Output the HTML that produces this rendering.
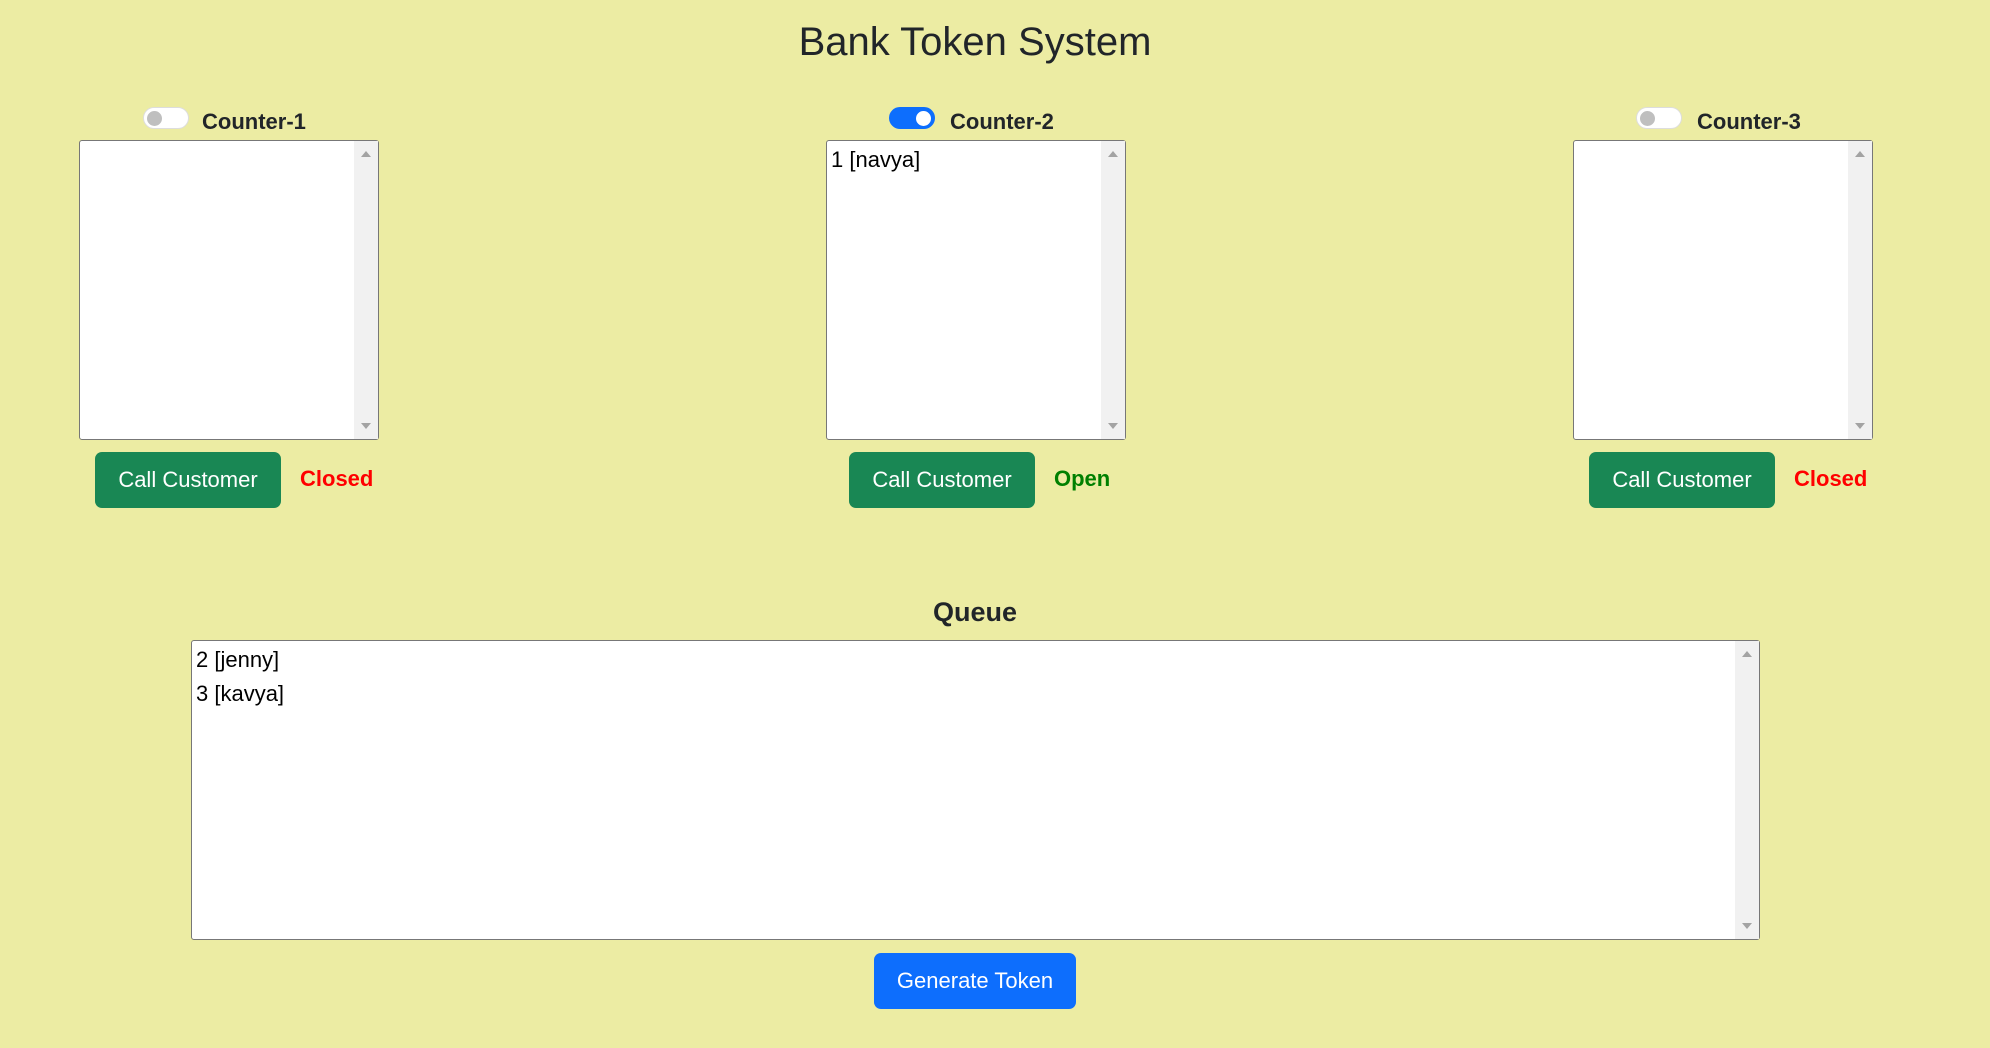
<!DOCTYPE html>
<html><head><style>
body{margin:0;width:1990px;height:1048px;background:#ececa3;font-family:"Liberation Sans",sans-serif;color:#212529;position:relative;overflow:hidden}
.a{position:absolute}
h1{position:absolute;left:0;width:1950px;top:16px;margin:0;text-align:center;font-size:40px;font-weight:500;line-height:52px}
.ta{position:absolute;background:#fff;border:1px solid #777;border-radius:3px;box-sizing:border-box;font-size:22px;line-height:34px;padding:2px 4px;color:#000}
.sb{position:absolute;right:0;top:0;bottom:0;width:24px;background:#f1f1f1}
.sb:before{content:"";position:absolute;left:7px;top:10px;border:5px solid transparent;border-bottom:6px solid #a3a3a3;border-top:0}
.sb:after{content:"";position:absolute;left:7px;bottom:10px;border:5px solid transparent;border-top:6px solid #a3a3a3;border-bottom:0}
.tg{position:absolute;width:46px;height:22px;border-radius:12px;border:1px solid #ddd;background:#fff;box-sizing:border-box;top:107px}
.tg i{position:absolute;left:3px;top:3px;width:15px;height:15px;border-radius:50%;background:#bfbfbf}
.tg.on{background:#0d6efd;border-color:#0d6efd}
.tg.on i{left:auto;right:3px;background:#fff}
.lb{position:absolute;top:108px;font-size:22px;font-weight:bold;line-height:28px}
.btn{position:absolute;top:452px;width:186px;height:56px;border-radius:7px;background:#198754;color:#fff;font-size:22px;line-height:56px;text-align:center}
.st{position:absolute;top:464px;font-size:22px;font-weight:bold;line-height:30px}
</style></head><body>
<h1>Bank Token System</h1>

<div class="tg" style="left:143px"><i></i></div><div class="lb" style="left:202px">Counter-1</div>
<div class="ta" style="left:79px;top:140px;width:300px;height:300px"><div class="sb"></div></div>
<div class="btn" style="left:95px">Call Customer</div><div class="st" style="left:300px;color:#f00">Closed</div>

<div class="tg on" style="left:889px"><i></i></div><div class="lb" style="left:950px">Counter-2</div>
<div class="ta" style="left:826px;top:140px;width:300px;height:300px">1 [navya]<div class="sb"></div></div>
<div class="btn" style="left:849px">Call Customer</div><div class="st" style="left:1054px;color:#008000">Open</div>

<div class="tg" style="left:1636px"><i></i></div><div class="lb" style="left:1697px">Counter-3</div>
<div class="ta" style="left:1573px;top:140px;width:300px;height:300px"><div class="sb"></div></div>
<div class="btn" style="left:1589px">Call Customer</div><div class="st" style="left:1794px;color:#f00">Closed</div>

<div class="a" style="left:0;width:1950px;top:594px;text-align:center;font-size:27px;font-weight:bold;line-height:36px">Queue</div>
<div class="ta" style="left:191px;top:640px;width:1569px;height:300px">2 [jenny]<br>3 [kavya]<div class="sb"></div></div>
<div class="a" style="left:874px;top:953px;width:202px;height:56px;border-radius:7px;background:#0d6efd;color:#fff;font-size:22px;line-height:56px;text-align:center">Generate Token</div>
</body></html>
